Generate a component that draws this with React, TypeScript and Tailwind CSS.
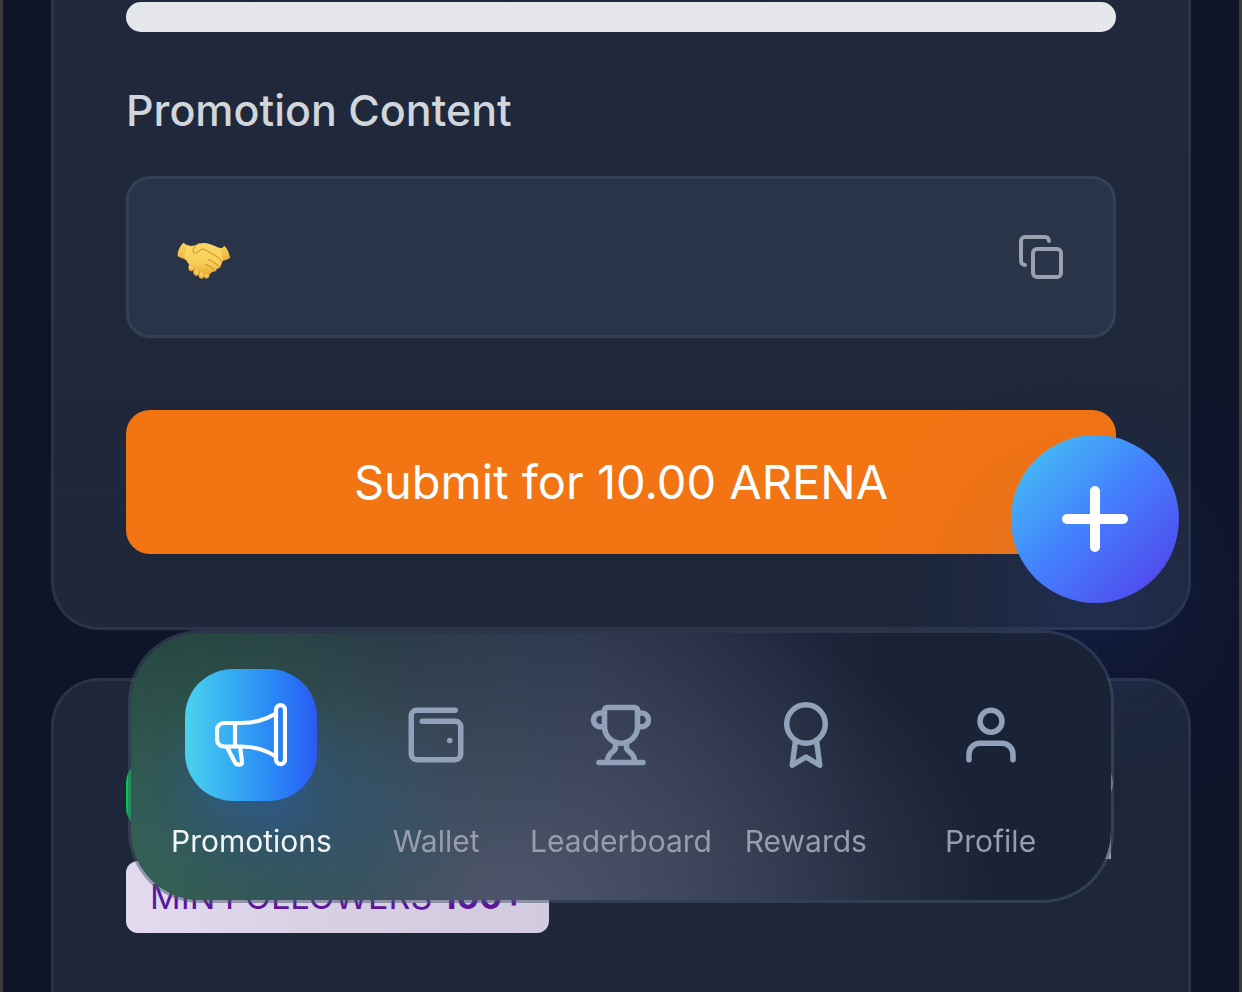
import React, { useState } from 'react';
import { Copy, Plus, Trophy, WalletMinimal } from 'lucide-react';
import { FiAward, FiUser } from 'react-icons/fi';

interface NavItem {
  label: string;
  icon: React.JSX.Element;
}

function MegaphoneIcon(): React.JSX.Element {
  return (
    <svg
      viewBox="0 0 72 64"
      className="h-16 w-[72px]"
      fill="none"
      stroke="currentColor"
      strokeWidth="4.2"
      strokeLinecap="round"
      strokeLinejoin="round"
      aria-hidden="true"
    >
      <rect x="61" y="2.2" width="9" height="59" rx="4.5" />
      <path d="M61 10.5C50 17 38 20 26 20H9a7 7 0 0 0-7 7v9.500a7 7 0 0 0 7 7h17c13 0 25 3.500 35 10" />
      <path d="M20 20v23.500" />
      <path d="M12.500 45l7.500 14.500c1 1.800 2.200 2.200 4 2.200 2.400 0 3.300-1.200 3-3.200L25.200 45" />
    </svg>
  );
}

function HandshakeIcon(): React.JSX.Element {
  return (
    <svg viewBox="0 0 54 38" className="h-[38px] w-[54px]" role="img" aria-label="Handshake">
      <defs>
        <linearGradient id="skin" x1="0" y1="0" x2="0" y2="1">
          <stop offset="0" stopColor="#fbd768" />
          <stop offset="0.6" stopColor="#f8cf58" />
          <stop offset="1" stopColor="#e9ad35" />
        </linearGradient>
        <linearGradient id="wrist" x1="0" y1="0" x2="0.4" y2="1">
          <stop offset="0" stopColor="#fcd75f" />
          <stop offset="1" stopColor="#ecb542" />
        </linearGradient>
      </defs>
      {/* fingertips under the palms */}
      <g fill="url(#skin)" stroke="#b97a1c" strokeWidth="0.5">
        <ellipse cx="14.500" cy="25.500" rx="3" ry="3.600" />
        <ellipse cx="19.500" cy="30" rx="3" ry="3.800" />
        <ellipse cx="24.500" cy="33" rx="2.800" ry="3.600" />
        <ellipse cx="29.500" cy="33" rx="2.800" ry="3.400" />
      </g>
      {/* right hand */}
      <path d="M47.500 4c3 3 5 7.500 5.500 12-2.500 1.600-5.500 2.500-8 3L37 8c4 0 7.500-1.500 10.500-4z" fill="url(#wrist)" />
      <path
        d="M22 1.500c7-1.500 11 .5 16 2.500 3 1.500 4.500 2 6 2l2 12-2 5c-.5 3-2.500 3.500-4 3.500-.5 3-3 3.500-5 3-1 3-4.500 3.500-7 2L14 22 8 14z"
        fill="url(#skin)"
      />
      {/* left hand */}
      <path d="M6.500.8C3 4 .5 9 .7 14c2.600 1.700 5.600 2.600 8.300 4L16 4.500C12 4 9 3 6.500.8z" fill="url(#wrist)" />
      <path d="M10 3.500c4 1 7 .5 11-1.500l6 5 17 12-2 6-7 5-7 3-15-9L7 15z" fill="url(#skin)" />
      <path
        d="M22 1.500c-3.500 1.500-5 3.500-6 6.500-.7 2.700 2.300 4 4.500 2.300 2-1.600 3-3.300 5.500-3.300 5 2 15 7.500 19 12.500"
        fill="none"
        stroke="#c88a25"
        strokeWidth="1"
        strokeLinecap="round"
      />
      <path
        d="M31 17.500c4 1.500 9 4.500 12 7.500M28.500 22.500c4 1 7.500 3.500 9.500 6.500"
        fill="none"
        stroke="#c88a25"
        strokeWidth="1"
        strokeLinecap="round"
      />
    </svg>
  );
}

const navItems: NavItem[] = [
  { label: 'Promotions', icon: <MegaphoneIcon /> },
  { label: 'Wallet', icon: <WalletMinimal className="size-[66px]" aria-hidden="true" /> },
  { label: 'Leaderboard', icon: <Trophy className="size-[66px]" aria-hidden="true" /> },
  { label: 'Rewards', icon: <FiAward className="size-[66px]" aria-hidden="true" /> },
  { label: 'Profile', icon: <FiUser className="size-[66px]" aria-hidden="true" /> },
];

function BottomNav(): React.JSX.Element {
  const [active, setActive] = useState<string>('Promotions');

  return (
    <nav
      className="fixed inset-x-32 bottom-[89px] grid grid-cols-5 rounded-[72px] border-[3px] border-slate-600/50 bg-[radial-gradient(200px_120px_at_16%_66%,#2f5480aa,transparent),radial-gradient(340px_360px_at_0%_90%,#34604f_10%,transparent),radial-gradient(490px_340px_at_38%_100%,#4b5468_5%,transparent),linear-gradient(90deg,#1e3a3a,#223740_22%,#29324a_48%,#1a2236_76%)] bg-clip-padding px-7 pt-9 pb-[35px]"
    >
      {navItems.map((item: NavItem) => {
        const isActive = item.label === active;
        return (
          <button
            key={item.label}
            type="button"
            onClick={() => setActive(item.label)}
            aria-current={isActive ? 'page' : undefined}
            className="flex cursor-pointer flex-col items-center gap-4"
          >
            <span
              className={`flex size-[132px] items-center justify-center rounded-[48px] ${
                isActive
                  ? 'bg-linear-to-r from-[#4bd3ee] to-[#2b59f3] text-white shadow-[0_30px_45px_-9px_rgba(43,110,240,0.2)]'
                  : 'text-slate-400'
              }`}
            >
              {item.icon}
            </span>
            <span className={`text-[30px] leading-[48px] whitespace-nowrap ${isActive ? 'text-gray-100' : 'text-[#989dab]'}`}>
              {item.label}
            </span>
          </button>
        );
      })}
    </nav>
  );
}

function App(): React.JSX.Element {
  return (
    <div className="flex h-screen flex-col gap-12 overflow-hidden border-x-[3px] border-[#3b3b3b] bg-[#0f1529] px-12 font-['Inter','Liberation_Sans',sans-serif]">
      {/* Promotion card */}
      <section className="flex shrink-0 flex-col rounded-b-[48px] border-x-[3px] border-b-[3px] border-[#293449] bg-linear-to-b from-[#20283b] to-[#1f283a] px-[72px] pt-0.5 pb-[73px]">
        <div className="h-[30px] rounded-[15px] bg-gray-200" />

        <h2 className="mt-12 text-[43px] leading-[60px] font-medium text-gray-300">Promotion Content</h2>

        <div className="mt-9 flex items-center justify-between rounded-3xl border-[3px] border-[#334055] bg-[#293448] p-12">
          <span className="flex h-[60px] items-center pt-2">
            <HandshakeIcon />
          </span>
          <button type="button" aria-label="Copy content" className="cursor-pointer text-gray-400">
            <Copy className="size-12" />
          </button>
        </div>

        <button
          type="button"
          className="mt-[72px] h-36 cursor-pointer rounded-3xl bg-[#f27413] text-[47px] text-white"
        >
          Submit for 10.00 ARENA
        </button>
      </section>

      {/* Next card, partly behind the nav */}
      <section className="flex grow items-start justify-between rounded-t-[48px] border-x-[3px] border-t-[3px] border-[#293449] bg-[#1e2739] px-[72px] pt-[78px]">
        <div className="flex flex-col items-start gap-[30px]">
          <span className="h-[72px] w-48 rounded-3xl bg-green-500" />
          <span className="rounded-xl bg-linear-to-r from-[#e2dbf0] via-[#d8cfe3] to-[#d2cadf] px-6 text-[34px] leading-[72px] text-[#5a179b]">
            MIN FOLLOWERS <b>100+</b>
          </span>
        </div>
        <div className="flex flex-col items-end gap-2 pr-[3px]">
          <span className="size-12 rounded-full bg-gray-400" />
          <span className="mr-0.5 h-11 w-24 bg-gray-400" />
        </div>
      </section>

      <button
        type="button"
        aria-label="Create promotion"
        className="fixed right-[63px] bottom-[389px] flex size-[168px] cursor-pointer items-center justify-center rounded-full bg-linear-to-br from-[#48c8f0] via-[#447dfd] to-[#5035e6] text-white shadow-[0_75px_150px_-36px_rgba(43,90,240,0.55)]"
      >
        <Plus className="size-24" strokeWidth={2.5} />
      </button>

      <BottomNav />
    </div>
  );
}

export default App;
